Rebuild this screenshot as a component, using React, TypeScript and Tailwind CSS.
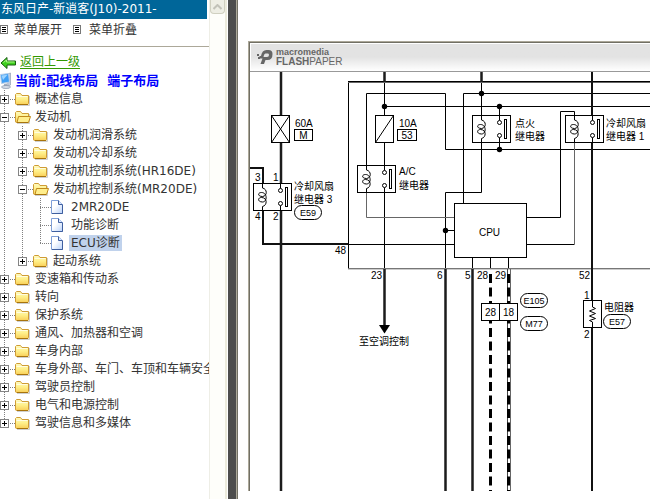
import { useState } from 'react'

interface TreeNode {
  id: string
  label: string
  children?: TreeNode[]
  isDoc?: boolean
}

const TREE: TreeNode[] = [
  { id: 'overview', label: '概述信息' },
  {
    id: 'engine',
    label: '发动机',
    children: [
      { id: 'lube', label: '发动机润滑系统' },
      { id: 'cooling', label: '发动机冷却系统' },
      { id: 'hr16', label: '发动机控制系统(HR16DE)' },
      {
        id: 'mr20',
        label: '发动机控制系统(MR20DE)',
        children: [
          { id: '2mr20', label: '2MR20DE', isDoc: true },
          { id: 'function', label: '功能诊断', isDoc: true },
          { id: 'ecu', label: 'ECU诊断', isDoc: true },
        ],
      },
      { id: 'starting', label: '起动系统' },
    ],
  },
  { id: 'transmission', label: '变速箱和传动系' },
  { id: 'steering', label: '转向' },
  { id: 'restraint', label: '保护系统' },
  { id: 'hvac', label: '通风、加热器和空调' },
  { id: 'interior', label: '车身内部' },
  { id: 'exterior', label: '车身外部、车门、车顶和车辆安全' },
  { id: 'driver', label: '驾驶员控制' },
  { id: 'electric', label: '电气和电源控制' },
  { id: 'infotainment', label: '驾驶信息和多媒体' },
]

function FolderIcon({ open }: { open: boolean }) {
  return (
    <svg width="16" height="18" viewBox="0 0 16 18" className="shrink-0" aria-hidden="true">
      <defs>
        <linearGradient id="folder" x1="0" y1="0" x2="0" y2="1">
          <stop offset="0" stopColor="#fffbc0" />
          <stop offset=".5" stopColor="#fff08a" />
          <stop offset="1" stopColor="#f9cf58" />
        </linearGradient>
      </defs>
      <path d="M2 15.5H14.5V6" fill="none" stroke="#cfcfcf" />
      <path d="M.5 13V4.5L1.5 3.5H5.5L7 5.5H13.5V13.5Q13.5 14.5 12.5 14.5H1.5Q.5 14.5 .5 13Z" fill="url(#folder)" stroke="#cf9c35" />
      {open ? (
        <path d="M3.5 8.5H15.5L13.5 14.5H2Z" fill="#ffee8c" stroke="#c08a1c" />
      ) : (
        <path d="M1.5 6.5H12.5" stroke="#fffde0" />
      )}
      <path d="M2 14.5H13" stroke="#a8740c" />
    </svg>
  )
}

function DocIcon() {
  return (
    <svg width="16" height="18" viewBox="0 0 16 18" className="shrink-0" aria-hidden="true">
      <defs>
        <linearGradient id="doc" x1="0" y1="0" x2="1" y2="1">
          <stop offset=".4" stopColor="#ffffff" />
          <stop offset="1" stopColor="#b9d2fa" />
        </linearGradient>
      </defs>
      <path d="M.5 2.5H7.5L11.5 6.5V15.5H.5Z" fill="url(#doc)" stroke="#7f9fd8" />
      <path d="M7.5 2.5V6.5H11.5" fill="#dbe8ff" stroke="#3f5f9f" />
      <path d="M11.5 7V15.5H1" fill="none" stroke="#3f5f9f" />
    </svg>
  )
}

function ComputerIcon() {
  return (
    <svg width="15" height="18" viewBox="0 0 15 18" className="shrink-0" aria-hidden="true">
      <path d="M7 2L10.5 1V13L8 15Z" fill="#c3cddd" stroke="#8794aa" strokeWidth=".6" />
      <path d="M.5 2.5L8.5 1.5L9.5 10L1.5 11.5Z" fill="#3f9ff5" stroke="#b9cfea" />
      <path d="M1.5 3.5L7.5 2.7L3 8Z" fill="#9ed4ff" />
      <path d="M4 12L7 11.5L8 14L4 14.5Z" fill="#a3afc2" />
      <ellipse cx="6" cy="15" rx="4.5" ry="1.5" fill="#d5dce8" stroke="#8290a8" strokeWidth=".7" />
    </svg>
  )
}

function BackIcon() {
  return (
    <svg width="16" height="18" viewBox="0 0 16 18" className="shrink-0" aria-hidden="true">
      <path d="M1 10L7 4.5V8H15.5V12H7V15.5Z" fill="#3fd01f" stroke="#175c10" strokeLinejoin="round" />
      <path d="M3.5 9.5L6.5 7V9H14.5" fill="none" stroke="#b0f58c" />
    </svg>
  )
}

function ListIcon() {
  return (
    <svg width="8" height="9" viewBox="0 0 8 9" className="shrink-0" aria-hidden="true">
      <rect x=".5" y=".5" width="7" height="8" fill="#fff" stroke="#777" />
      <path d="M2 2.5H6M2 4.5H6M2 6.5H6" stroke="#000" />
    </svg>
  )
}

// 连接虚线
function Guide({ half = false, stub = false }: { half?: boolean; stub?: boolean }) {
  return (
    <svg width="15" height="18" viewBox="0 0 15 18" className="shrink-0" aria-hidden="true">
      <path d={half ? 'M4.5 0V10' : 'M4.5 0V18'} stroke="#808080" strokeDasharray="1 1" />
      {stub && <path d="M4 9.5H15" stroke="#808080" strokeDasharray="1 1" />}
    </svg>
  )
}

interface RowsProps {
  nodes: TreeNode[]
  level: number
  opened: string[]
  selected: string
  onToggle: (id: string) => void
  onSelect: (id: string) => void
}

function TreeRows({ nodes, level, opened, selected, onToggle, onSelect }: RowsProps) {
  return (
    <ul>
      {nodes.map((node, i) => {
        const isOpen = opened.includes(node.id)
        const isLast = i === nodes.length - 1
        return (
          <li key={node.id}>
            <div className="flex h-[18px] items-center whitespace-nowrap">
              {Array.from({ length: level }, (_, n) => (
                <div key={n} className="w-[18px] shrink-0">
                  <Guide />
                </div>
              ))}
              {node.isDoc ? (
                <Guide half={isLast} stub />
              ) : (
                <button
                  type="button"
                  onClick={() => onToggle(node.id)}
                  aria-label={`${isOpen ? '折叠' : '展开'}${node.label}`}
                  className="relative h-[18px] w-[15px] shrink-0"
                >
                  <Guide half={isLast} stub />
                  <svg width="9" height="9" viewBox="0 0 9 9" className="absolute top-[5px] left-0">
                    <rect x=".5" y=".5" width="8" height="8" fill="#fff" stroke="#848484" />
                    <path d={isOpen ? 'M2 4.5H7' : 'M2 4.5H7M4.5 2V7'} stroke="#000" />
                  </svg>
                </button>
              )}
              {node.isDoc ? <DocIcon /> : <FolderIcon open={isOpen} />}
              <a
                href="#"
                onClick={() => onSelect(node.id)}
                className={`ml-0.5 px-0.5 leading-4 ${selected === node.id ? 'bg-[#c0d2ec]' : ''}`}
              >
                {node.label}
              </a>
            </div>
            {isOpen && node.children && (
              <TreeRows
                nodes={node.children}
                level={level + 1}
                opened={opened}
                selected={selected}
                onToggle={onToggle}
                onSelect={onSelect}
              />
            )}
          </li>
        )
      })}
    </ul>
  )
}

// 继电器：左侧线圈，右侧触点
function Relay({ x, y }: { x: number; y: number }) {
  return (
    <g transform={`translate(${x} ${y})`} fill="none" stroke="#000">
      <rect width="38" height="27" />
      <path d="M9 0V4.5C14 5.5 14 12.5 9 13C4 13 4 9 8 9C14 9 14 18.5 9 18.5C4 18.5 4 14 8 14C14 14 14 22 9 23V27" />
      <path d="M27 0V5M27 22V27" />
      <circle cx="27" cy="7" r="2" fill="#fff" />
      <circle cx="27" cy="20" r="2" fill="#fff" />
      <rect x="32" y="4" width="2" height="19" />
    </g>
  )
}

function Badge({ x, y, text }: { x: number; y: number; text: string }) {
  return (
    <g>
      <rect x={x} y={y} width="27" height="14" rx="7" fill="#fff" stroke="#000" />
      <text x={x + 13.5} y={y + 10.5} textAnchor="middle" className="text-[9px]">{text}</text>
    </g>
  )
}

const DOTS = [
  [384.5, 106.5],
  [481.5, 93.5],
  [499.5, 106.5],
  [499.5, 149.5],
  [445.5, 230.5],
]

const LABELS: [number, number, string][] = [
  [295, 127, '60A'],
  [399, 127, '10A'],
  [255, 181, '3'],
  [273, 181, '1'],
  [255, 220, '4'],
  [273, 220, '2'],
  [294, 190, '冷却风扇'],
  [294, 203, '继电器 3'],
  [399, 175, 'A/C'],
  [399, 189, '继电器'],
  [515, 127, '点火'],
  [515, 140, '继电器'],
  [606, 127, '冷却风扇'],
  [606, 140, '继电器 1'],
  [335, 254, '48'],
  [371, 279, '23'],
  [437, 279, '6'],
  [465, 279, '5'],
  [477, 279, '28'],
  [495, 279, '29'],
  [579, 279, '52'],
  [584, 299, '1'],
  [584, 338, '2'],
  [604, 311, '电阻器'],
  [359, 345, '至空调控制'],
]

function WiringDiagram() {
  return (
    <svg
      width="400"
      height="419"
      viewBox="250 72 400 419"
      className="block shrink-0 font-['Liberation_Sans','Noto_Sans_CJK_SC',sans-serif] text-[10px]"
      role="img"
      aria-label="冷却风扇电路图"
    >
      {/* 细线 */}
      <g fill="none" stroke="#000">
        <path d="M348.5 269V82" />
        <path d="M366.5 166V93.5H445.5V149.5H650" />
        <path d="M384.5 82V116M384.5 143V166M384.5 192V270" />
        <path d="M384.5 106.5H650" />
        <path d="M481.5 82V116M481.5 142V192.5H445.5V270" />
        <path d="M463.5 203V93.5H650" />
        <path d="M499.5 106V116M499.5 142V150" />
        <path d="M348 244.5H454M445 230.5H454" />
        <path d="M574.5 116V111.5H560.5V217.5H526" />
        <path d="M472.5 257V270M490.5 257V270M508.5 257V270" />
        <path d="M526 244.5H574.5" />
      </g>
      <g fill="none" stroke="#666">
        <path d="M366.5 192V217.5H454" />
        <path d="M574.5 142V244" />
      </g>
      <path d="M348 268.5H650" stroke="#777" />
      <path d="M348 269.5H650" stroke="#ccc" />
      <path d="M348 81.5H650" stroke="#000" />
      <path d="M348 82.5H650" stroke="#666" />

      {/* 粗线 */}
      <g fill="none" stroke="#111" strokeWidth="2">
        <path d="M250 168H263V184M263 210V244H348" />
        <path d="M592 72V116M592 142V301M592 328V491" />
      </g>
      <g fill="none" stroke="#1c1c1c" strokeWidth="2.5">
        <path d="M281 72V115M281 143V184M281 210V491" />
        <path d="M384.5 72V82M481.5 72V82" />
        <path d="M384.5 269V326M445.5 269V491M472.5 269V491" />
      </g>
      <path d="M379 325H390L384.5 333.5Z" />

      {/* CAN 双绞线 */}
      <path d="M507.5 269V491" stroke="#444" />
      <path d="M510.5 269V491" stroke="#666" />
      <path d="M490.5 274V491M508.5 274V491" stroke="#000" strokeWidth="3" strokeDasharray="9 4.5" />

      <g fill="#fff" stroke="#000">
        <rect x="454.5" y="203.5" width="72" height="54" />
        <rect x="271.5" y="115.5" width="18" height="27" />
        <rect x="375.5" y="115.5" width="18" height="27" />
        <rect x="583.5" y="300.5" width="18" height="27" />
        <rect x="481.5" y="303.5" width="36" height="17" />
        <rect x="294.5" y="129.5" width="18" height="11" />
        <rect x="397.5" y="129.5" width="19" height="11" />
      </g>
      <g fill="none" stroke="#000">
        <path d="M271.5 115.5L289.5 142.5M289.5 115.5L271.5 142.5M375.5 142.5L393.5 115.5" />
        <path d="M499.5 303V321" />
        <path d="M592.5 301V307L595.5 308.5L589.5 311L595.5 313.5L589.5 316L595.5 318.5L589.5 320.5L592.5 322V328" />
      </g>

      <Relay x={253.5} y={183.5} />
      <Relay x={357.5} y={165.5} />
      <Relay x={472.5} y={115.5} />
      <Relay x={565.5} y={115.5} />

      {DOTS.map(([cx, cy]) => (
        <circle key={`${cx}-${cy}`} cx={cx} cy={cy} r="2.7" />
      ))}

      <Badge x={294.5} y={205.5} text="E59" />
      <Badge x={520.5} y={293.5} text="E105" />
      <Badge x={520.5} y={316.5} text="M77" />
      <Badge x={603.5} y={314.5} text="E57" />

      {LABELS.map(([x, y, text]) => (
        <text key={`${x}-${y}`} x={x} y={y}>{text}</text>
      ))}
      <g textAnchor="middle">
        <text x="489.5" y="236">CPU</text>
        <text x="303.5" y="139">M</text>
        <text x="407" y="139">53</text>
        <text x="490.5" y="316">28</text>
        <text x="508.5" y="316">18</text>
      </g>
    </svg>
  )
}

function FlashPaperLogo() {
  return (
    <div className="flex items-center gap-[3px] text-[#666]">
      <svg width="16" height="16" viewBox="0 0 16 16" aria-hidden="true">
        <path
          fillRule="evenodd"
          d="M3.5 15L5.5 9.5H2.5V7H4Q5 1 9.5 1H11.5Q15.5 1 15.5 5Q15.5 11 10.5 11H8.5L7 15ZM8.5 4.5Q7.5 4.5 7 6L6.5 8H10Q12 8 12 6T10.5 4.5Z"
          fill="currentColor"
        />
        <path d="M0 5H2V7H0ZM1 8H3V10H1Z" fill="currentColor" />
      </svg>
      <div className="flex flex-col">
        <span className="text-[9px] leading-[9px] font-bold">macromedia</span>
        <span className="text-[10px] leading-[9px]">
          <b>FLASH</b>PAPER
        </span>
      </div>
    </div>
  )
}

export default function App() {
  const [opened, setOpened] = useState<string[]>(['engine', 'mr20'])
  const [selected, setSelected] = useState('ecu')

  const toggle = (id: string) => {
    setOpened((prev) => (prev.includes(id) ? prev.filter((item) => item !== id) : [...prev, id]))
  }

  return (
    <div className="flex h-screen overflow-hidden bg-white">
      {/* 目录 */}
      <aside className="w-[209px] shrink-0 overflow-hidden font-['DejaVu_Sans','Noto_Sans_CJK_SC',sans-serif] text-xs text-[#333]">
        <h1 className="mr-0.5 h-[19px] bg-[#006699] pl-px leading-[18px] whitespace-nowrap text-white">
          东风日产-新逍客(J10)-2011-
        </h1>
        <div className="flex h-7 items-center gap-[11px] border-b border-[#aca899] pb-1.5">
          <button type="button" onClick={() => setOpened(['engine', 'mr20'])} className="flex items-center gap-1.5">
            <ListIcon />
            菜单展开
          </button>
          <button type="button" onClick={() => setOpened([])} className="flex items-center gap-2">
            <ListIcon />
            菜单折叠
          </button>
        </div>
        <nav className="pt-1.5">
          <a href="#" className="flex h-[18px] items-center gap-1 text-[#339900]">
            <BackIcon />
            <span className="leading-4 underline underline-offset-2">返回上一级</span>
          </a>
          <div className="flex h-[19px] items-center text-[13px] font-bold whitespace-pre text-[#0000ff]">
            <ComputerIcon />
            当前:配线布局  端子布局
          </div>
          <TreeRows
            nodes={TREE}
            level={0}
            opened={opened}
            selected={selected}
            onToggle={toggle}
            onSelect={setSelected}
          />
        </nav>
      </aside>

      {/* 滚动条 */}
      <div className="mr-px w-[18px] shrink-0 border-r-2 border-l border-r-[#ecebdc] border-l-[#eeeee6] bg-[#fefefa]">
        <button
          type="button"
          aria-label="向上滚动"
          className="flex h-3.5 w-full items-center justify-center rounded-b-sm border-x border-b border-[#d0d0c0] bg-[#eeeee4]"
        >
          <svg width="9" height="6" viewBox="0 0 9 6" fill="none" stroke="#c2c2b8" strokeWidth="2">
            <path d="M.5 5L4.5 1L8.5 5" />
          </svg>
        </button>
      </div>
      <div className="w-2.5 shrink-0 border-r border-[#716f64] bg-[#aca899] pr-px">
        <div className="h-full bg-[#4d4d4d]" />
      </div>

      {/* 文档 */}
      <main className="min-w-0 flex-1 overflow-hidden pt-[41px] pl-2.5">
        <section className="border-t border-l border-[#aca899]">
          <div className="border-t border-l border-[#716f64]">
            <header className="flex h-[29px] items-center border-b border-[#999] bg-linear-to-b from-[#e3e3e3] from-50% to-white pl-[7px] font-['Liberation_Sans',sans-serif] shadow-[inset_1px_1px_0_#fff]">
              <FlashPaperLogo />
            </header>
            <WiringDiagram />
          </div>
        </section>
      </main>
    </div>
  )
}
